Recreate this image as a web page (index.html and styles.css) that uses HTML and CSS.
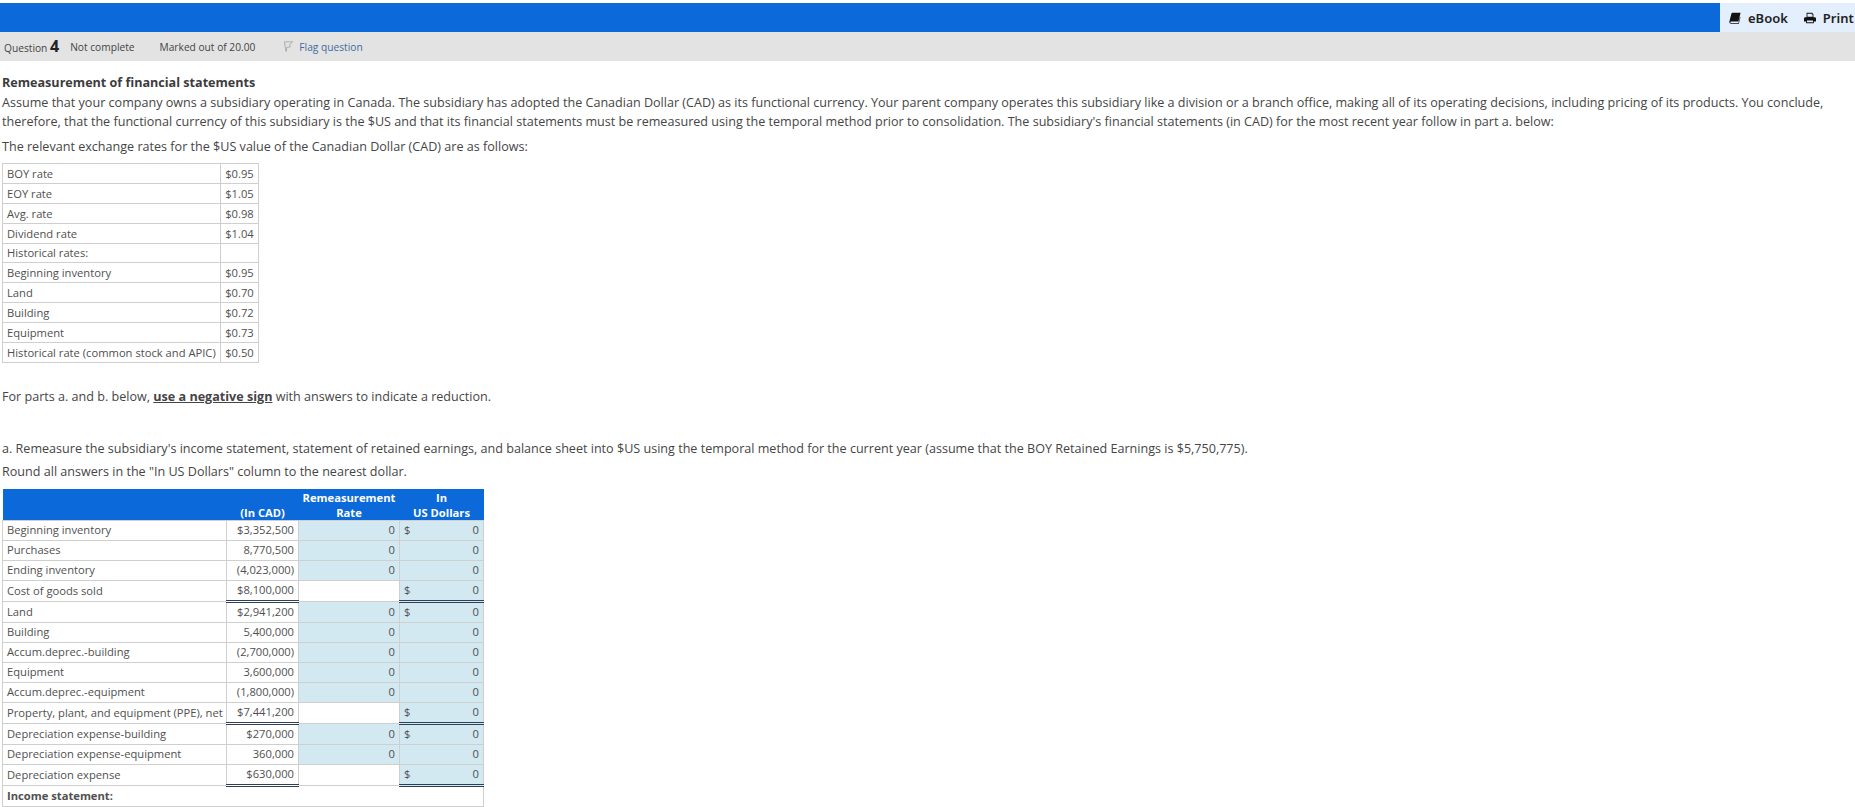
FILE: index.html
```html
<!DOCTYPE html>
<html lang="en">
<head>
<meta charset="utf-8">
<title>Question 4</title>
<link rel="stylesheet" href="styles.css">
</head>
<body>
<header class="topbar">
  <div class="tools">
    <span class="tool">
      <svg class="ico" viewBox="0 0 14 14"><path d="M4.200 1H13.500L11 11.200H2.800C2 11.200 1.500 11.700 1.600 12.200C1.700 12.600 2.100 12.800 2.700 12.800H11L12.800 5.500L13.300 6 11.500 13.600H2.400C1 13.600 .2 12.800 .4 11.500L2.500 2.800C2.800 1.700 3.300 1 4.200 1z" fill="#111"/></svg>
      eBook
    </span>
    <span class="tool">
      <svg class="ico" viewBox="0 0 14 14"><path d="M3 1h6.500L11 2.500V6H3V1zm1 1v3.500h6V3H9V2H4zM1.500 6h11c.8 0 1.500.7 1.500 1.500V11h-2.500v2h-9v-2H0V7.500C0 6.700.7 6 1.500 6zm2 4v2h7v-2h-7z" fill="#111" fill-rule="evenodd"/></svg>
      Print
    </span>
  </div>
</header>
<div class="qbar">
  <span class="qno">Question <b>4</b></span>
  <span class="qstate">Not complete</span>
  <span class="qmark">Marked out of 20.00</span>
  <span class="qflag">
    <svg class="flag" viewBox="0 0 10 12"><path d="M.5.800h9L6.200 3.800 7 6.500 3 7l-.3 4.500L2 11 .5.800z" fill="none" stroke="#999" stroke-width=".8"/></svg>
    Flag question
  </span>
</div>
<main class="content">
  <h1 class="title">Remeasurement of financial statements</h1>
  <p class="intro">Assume that your company owns a subsidiary operating in Canada. The subsidiary has adopted the Canadian Dollar (CAD) as its functional currency. Your parent company operates this subsidiary like a division or a branch office, making all of its operating decisions, including pricing of its products. You conclude, therefore, that the functional currency of this subsidiary is the $US and that its financial statements must be remeasured using the temporal method prior to consolidation. The subsidiary's financial statements (in CAD) for the most recent year follow in part a. below:</p>
  <p class="line rates-lead">The relevant exchange rates for the $US value of the Canadian Dollar (CAD) are as follows:</p>
  <table class="rates">
    <tr><td>BOY rate</td><td class="num">$0.95</td></tr>
    <tr><td>EOY rate</td><td class="num">$1.05</td></tr>
    <tr><td>Avg. rate</td><td class="num">$0.98</td></tr>
    <tr><td>Dividend rate</td><td class="num">$1.04</td></tr>
    <tr class="short"><td>Historical rates:</td><td class="num"></td></tr>
    <tr><td>Beginning inventory</td><td class="num">$0.95</td></tr>
    <tr><td>Land</td><td class="num">$0.70</td></tr>
    <tr><td>Building</td><td class="num">$0.72</td></tr>
    <tr><td>Equipment</td><td class="num">$0.73</td></tr>
    <tr><td>Historical rate (common stock and APIC)</td><td class="num">$0.50</td></tr>
  </table>
  <p class="line neg">For parts a. and b. below, <strong class="under">use a negative sign</strong> with answers to indicate a reduction.</p>
  <p class="line parta">a. Remeasure the subsidiary's income statement, statement of retained earnings, and balance sheet into $US using the temporal method for the current year (assume that the BOY Retained Earnings is $5,750,775).</p>
  <p class="line round">Round all answers in the "In US Dollars" column to the nearest dollar.</p>
  <table class="sheet">
    <colgroup><col class="c1"><col class="c2"><col class="c3"><col class="c4"><col class="c5"></colgroup>
    <thead>
      <tr><th></th><th>(In CAD)</th><th>Remeasurement<br>Rate</th><th colspan="2">In<br>US Dollars</th></tr>
    </thead>
    <tbody>
      <tr><td>Beginning inventory</td><td class="num">$3,352,500</td><td class="inp num">0</td><td class="inp cur">$</td><td class="inp num">0</td></tr>
      <tr><td>Purchases</td><td class="num">8,770,500</td><td class="inp num">0</td><td class="inp cur"></td><td class="inp num">0</td></tr>
      <tr><td>Ending inventory</td><td class="num">(4,023,000)</td><td class="inp num">0</td><td class="inp cur"></td><td class="inp num">0</td></tr>
      <tr class="total"><td>Cost of goods sold</td><td class="num tot">$8,100,000</td><td></td><td class="inp cur tot">$</td><td class="inp num tot">0</td></tr>
      <tr><td>Land</td><td class="num">$2,941,200</td><td class="inp num">0</td><td class="inp cur">$</td><td class="inp num">0</td></tr>
      <tr><td>Building</td><td class="num">5,400,000</td><td class="inp num">0</td><td class="inp cur"></td><td class="inp num">0</td></tr>
      <tr><td>Accum.deprec.-building</td><td class="num">(2,700,000)</td><td class="inp num">0</td><td class="inp cur"></td><td class="inp num">0</td></tr>
      <tr><td>Equipment</td><td class="num">3,600,000</td><td class="inp num">0</td><td class="inp cur"></td><td class="inp num">0</td></tr>
      <tr><td>Accum.deprec.-equipment</td><td class="num">(1,800,000)</td><td class="inp num">0</td><td class="inp cur"></td><td class="inp num">0</td></tr>
      <tr class="total"><td>Property, plant, and equipment (PPE), net</td><td class="num tot">$7,441,200</td><td></td><td class="inp cur tot">$</td><td class="inp num tot">0</td></tr>
      <tr><td>Depreciation expense-building</td><td class="num">$270,000</td><td class="inp num">0</td><td class="inp cur">$</td><td class="inp num">0</td></tr>
      <tr><td>Depreciation expense-equipment</td><td class="num">360,000</td><td class="inp num">0</td><td class="inp cur"></td><td class="inp num">0</td></tr>
      <tr class="total"><td>Depreciation expense</td><td class="num tot">$630,000</td><td></td><td class="inp cur tot">$</td><td class="inp num tot">0</td></tr>
      <tr><td colspan="5" class="sect">Income statement:</td></tr>
      <tr><td></td><td></td><td class="inp"></td><td class="inp"></td><td class="inp"></td></tr>
    </tbody>
  </table>
</main>
</body>
</html>
```

FILE: styles.css
```css
html, body {
  margin: 0;
  height: 807px;
  overflow: hidden;
  background: #fff;
}
body {
  font-family: "Open Sans", "Liberation Sans", sans-serif;
  font-size: 12.58px;
  color: #454545;
  padding-top: 3px;
  box-sizing: border-box;
}
.topbar {
  height: 29px;
  background: #0b69d9;
  display: flex;
  justify-content: flex-end;
}
.tools {
  width: 135px;
  background: #e3effc;
  display: flex;
  align-items: center;
  gap: 16px;
  padding-left: 9px;
  box-sizing: border-box;
  white-space: nowrap;
}
.tool {
  display: flex;
  align-items: center;
  gap: 7px;
  font-family: "Noto Sans", "Open Sans", sans-serif;
  font-weight: 600;
  font-size: 13px;
  color: #222;
}
.ico { width: 12px; height: 12px; }
.qbar {
  height: 29px;
  background: #e3e3e3;
  display: flex;
  align-items: center;
  font-size: 10.200px;
  color: #444;
  padding-left: 4px;
}
.qno b { font-size: 16px; color: #222; font-weight: 700; line-height: 14px; }
.qstate { margin-left: 11px; }
.qmark { margin-left: 25px; }
.qflag { margin-left: 29px; color: #3d6d9c; display: flex; align-items: center; gap: 6px; }
.flag { width: 9px; height: 11px; }
.content { padding: 12px 0 0 2px; }
.title {
  font-size: 12.58px;
  font-weight: 700;
  margin: 0;
  line-height: 20px;
  color: #3c3c3c;
}
.intro { margin: 0; line-height: 19px; width: 1835px; }
.line { margin: 0; line-height: 19px; }
.rates-lead { margin-top: 6px; }
table { border-collapse: collapse; }
.rates {
  margin-top: 7px;
  font-size: 11.200px;
  color: #505050;
}
.rates td {
  border: 1px solid #cfcfcf;
  height: 19px;
  padding: 0 4px;
  white-space: nowrap;
  line-height: 14px;
}
.rates .short td { height: 18px; }
.rates td.num { width: 29px; }
.num { text-align: right; }
.neg { margin-top: 24px; }
.under { text-decoration: underline; font-weight: 700; }
.parta { margin-top: 33px; }
.round { margin-top: 4px; }
.sheet {
  margin-top: 8px;
  table-layout: fixed;
  width: 481px;
  font-size: 11.200px;
  color: #505050;
}
.c1 { width: 224px; }
.c2 { width: 72px; }
.c3 { width: 101px; }
.c4 { width: 20px; }
.c5 { width: 64px; }
.sheet th {
  background: #0b69d9;
  color: #fff;
  font-size: 11.200px;
  font-weight: 700;
  line-height: 15px;
  height: 31px;
  vertical-align: bottom;
  padding: 0;
  text-align: center;
  border: 0;
}
.sheet td {
  border: 1px solid #cfcfcf;
  height: 18px;
  padding: 0 4px 1px;
  white-space: nowrap;
  line-height: 14px;
}
.sheet .inp { background: #d3e9f1; }
.sheet td.cur { border-right: 0; padding-right: 0; }
.sheet td.cur + td.num { border-left: 0; }
.sheet td.tot {
  border-top: 1px solid #000;
  border-bottom: 3px double #2f3f55;
}
.sheet td.sect { font-weight: 700; }
```
